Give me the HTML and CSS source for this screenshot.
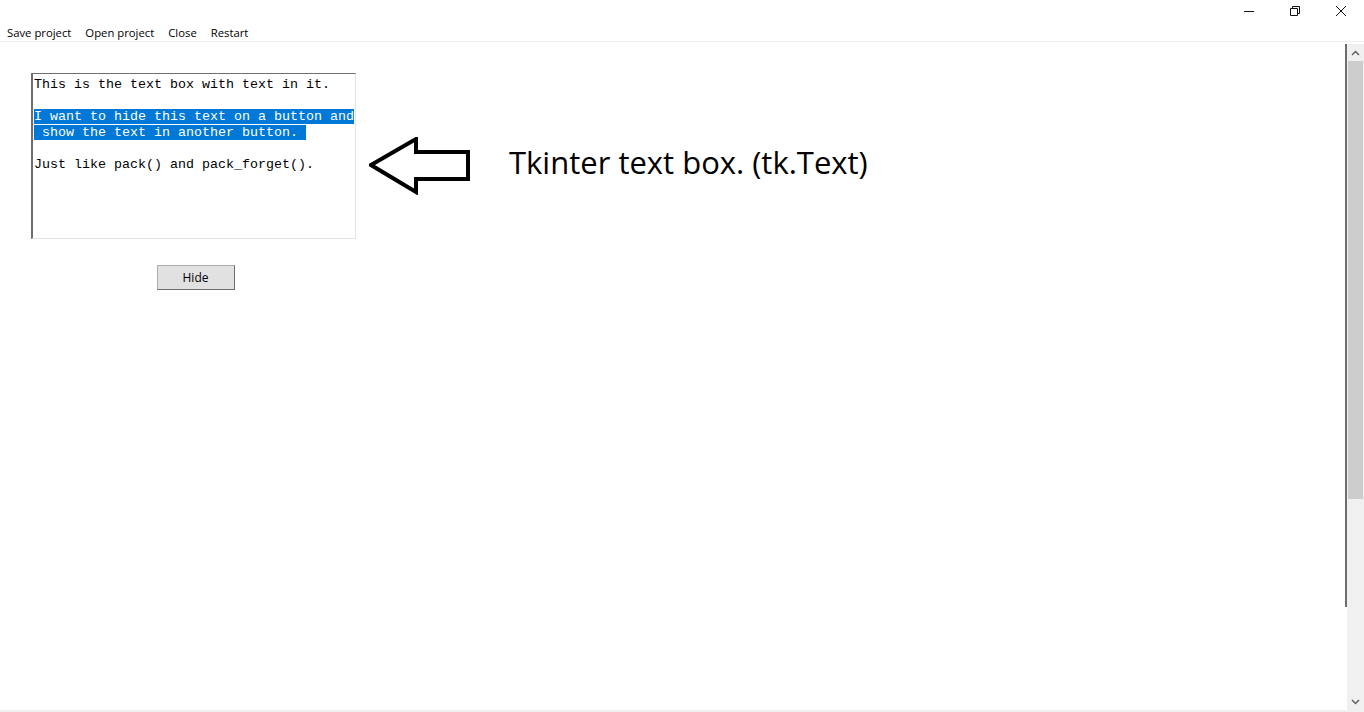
FILE: index.html
```html
<!DOCTYPE html>
<html>
<head>
<meta charset="utf-8">
<link rel="stylesheet" href="styles.css">
</head>
<body>
<div class="window">
  <div class="titlebar">
    <div class="ctl"><svg width="12" height="12" viewBox="0 0 12 12"><path d="M1 6.5H11" stroke="#111" stroke-width="1"/></svg></div>
    <div class="ctl"><svg width="12" height="12" viewBox="0 0 12 12"><path d="M1.5 3.5h7v7h-7z M3.5 3.5V1.5h7v7h-2" fill="none" stroke="#111" stroke-width="1"/></svg></div>
    <div class="ctl"><svg width="12" height="12" viewBox="0 0 12 12"><path d="M1 1L11 11M11 1L1 11" stroke="#111" stroke-width="1"/></svg></div>
  </div>
  <div class="menubar">
    <span class="mi">Save project</span>
    <span class="mi">Open project</span>
    <span class="mi">Close</span>
    <span class="mi">Restart</span>
  </div>
  <div class="body">
    <div class="content">
      <div class="row">
        <div class="left">
          <div class="textbox"><div>This is the text box with text in it.</div><div>&nbsp;</div><div><span class="sel">I want to hide this text on a button and</span></div><div><span class="sel"> show the text in another button. </span></div><div>&nbsp;</div><div>Just like pack() and pack_forget().</div></div>
          <div class="btnrow"><button class="btn">Hide</button></div>
        </div>
        <svg class="arrow" width="102" height="58" viewBox="0 0 102 58"><path d="M2 28 L47 2 L47 15 L99 15 L99 42 L47 42 L47 55 Z" fill="#fff" stroke="#000" stroke-width="4" stroke-linejoin="miter"/></svg>
        <div class="label">Tkinter text box. (tk.Text)</div>
      </div>
    </div>
    <div class="scrollbar">
      <div class="sb-up"><svg width="9" height="6" viewBox="0 0 9 6"><path d="M1 5L4.5 1.5L8 5" fill="none" stroke="#606060" stroke-width="1.5"/></svg></div>
      <div class="sb-thumb"></div>
      <div class="sb-track"></div>
      <div class="sb-down"><svg width="9" height="6" viewBox="0 0 9 6"><path d="M1 1L4.5 4.5L8 1" fill="none" stroke="#606060" stroke-width="1.5"/></svg></div>
    </div>
  </div>
</div>
</body>
</html>
```
FILE: styles.css
```css
html, body {
  margin: 0;
  padding: 0;
  background: #fff;
}
.window {
  width: 1364px;
  height: 712px;
  display: flex;
  flex-direction: column;
  overflow: hidden;
  font-family: "Open Sans", "Noto Sans", sans-serif;
}
.titlebar {
  height: 22px;
  display: flex;
  justify-content: flex-end;
}
.ctl {
  width: 46px;
  height: 22px;
  display: flex;
  align-items: center;
  justify-content: center;
}
.menubar {
  height: 19px;
  display: flex;
  align-items: center;
  padding-left: 0;
  border-bottom: 1px solid #f0f0f0;
  font-size: 11.3px;
  color: #000;
}
.mi {
  padding: 2px 7px 0 7px;
  line-height: 17px;
}
.body {
  flex: 1;
  display: flex;
  border-bottom: 2px solid #f0f0f0;
}
.content {
  flex: 1;
  padding: 31px 0 0 31px;
}
.row {
  display: flex;
  align-items: flex-start;
}
.left {
  display: flex;
  flex-direction: column;
}
.textbox {
  width: 321px;
  height: 161px;
  border-top: 1px solid #6e6e6e;
  border-left: 2px solid #6e6e6e;
  border-right: 1px solid #e3e3e3;
  border-bottom: 1px solid #e3e3e3;
  padding: 3px 0 0 1px;
  box-sizing: content-box;
  font-family: "Liberation Mono", "Courier New", monospace;
  font-size: 13.33px;
  line-height: 16px;
  white-space: pre;
  color: #000;
  overflow: hidden;
}
.sel {
  background: #0078d7;
  color: #fff;
}
.btnrow {
  display: flex;
  justify-content: center;
  padding: 26px 0 0 4px;
}
.btn {
  width: 78px;
  height: 25px;
  background: #e1e1e1;
  border: 1px solid #adadad;
  border-right: 1px solid #6e6e6e;
  border-bottom: 1px solid #6e6e6e;
  font-family: "Open Sans", "Noto Sans", sans-serif;
  font-size: 12px;
  color: #000;
  padding: 0;
}
.arrow {
  margin: 64px 0 0 13px;
}
.label {
  margin: 68px 0 0 38px;
  font-family: "Open Sans", "Noto Sans", sans-serif;
  font-size: 31px;
  line-height: 42px;
  color: #000;
}
.scrollbar {
  width: 17px;
  margin-top: 2px;
  border-left: 1px solid #fff;
  display: flex;
  flex-direction: column;
  background: #f0f0f0;
  position: relative;
}
.scrollbar::before {
  content: "";
  position: absolute;
  left: -2px;
  top: 0;
  width: 2px;
  height: 563px;
  background: #6e6e6e;
}
.sb-up, .sb-down {
  height: 17px;
  display: flex;
  align-items: center;
  justify-content: center;
}
.sb-thumb {
  height: 438px;
  margin: 0 1px;
  background: #cdcdcd;
}
.sb-track { flex: 1; }
```
